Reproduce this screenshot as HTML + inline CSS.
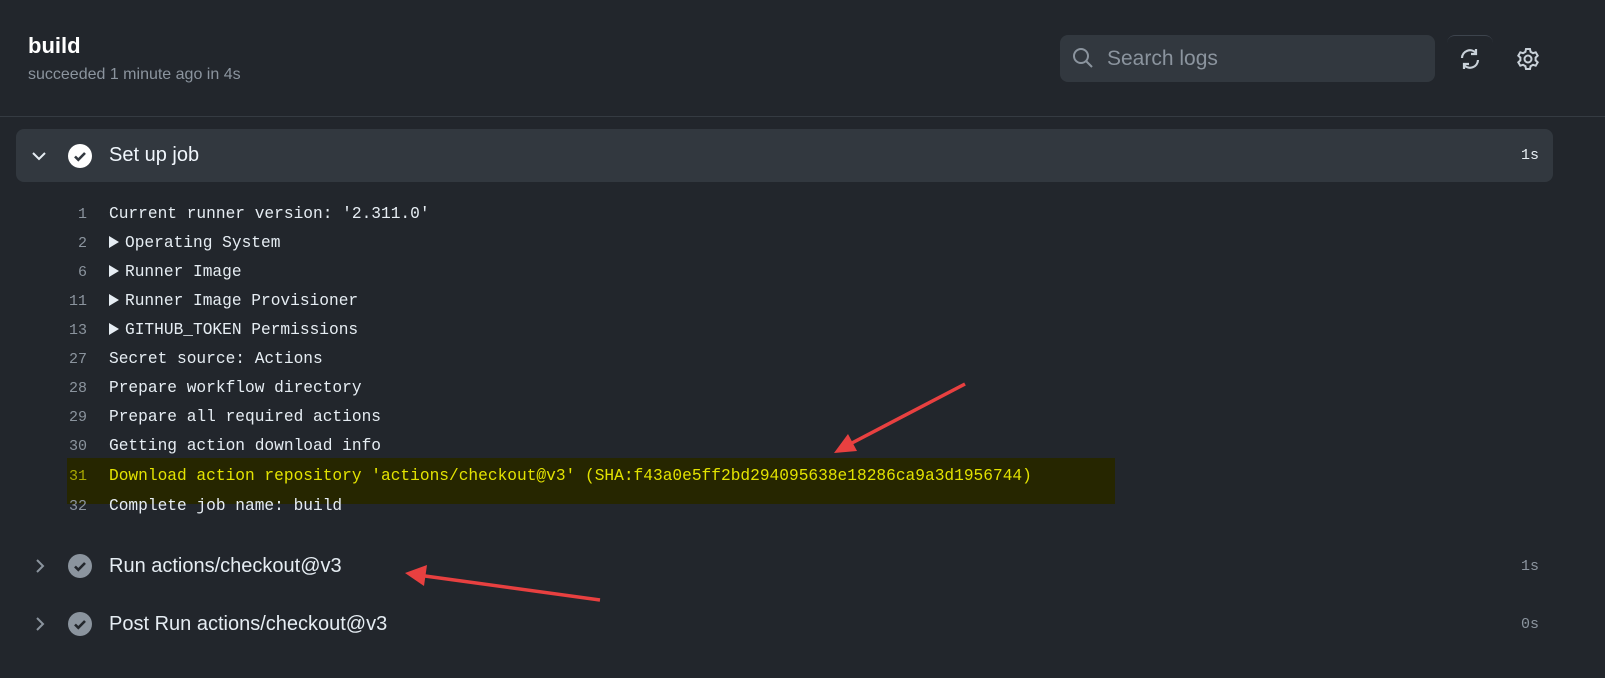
<!DOCTYPE html>
<html><head><meta charset="utf-8"><style>
body{margin:0;width:1605px;height:678px;background:#22262c;font-family:"Liberation Sans",sans-serif;position:relative;overflow:hidden}
.abs{position:absolute}
.mono{font-family:"Liberation Mono",monospace;font-size:16.2px;color:#e6edf3}
.ln{position:absolute;left:60px;width:27px;text-align:right;color:#8b949e;font-family:"Liberation Mono",monospace;font-size:15px}
.tx{position:absolute;left:109px;white-space:pre}
.tri{display:inline-block;width:0;height:0;border-left:10px solid #e6edf3;border-top:6px solid transparent;border-bottom:6px solid transparent;margin-right:6px;vertical-align:-1px}
</style></head><body>
<div class="abs" style="left:28px;top:33px;font-size:22px;font-weight:bold;color:#fff">build</div>
<div class="abs" style="left:28px;top:66px;font-size:16px;color:#8b949e">succeeded 1 minute ago in 4s</div>
<div class="abs" style="left:1060px;top:35px;width:375px;height:47px;background:#32383f;border-radius:8px"></div>
<svg class="abs" style="left:1071px;top:46px" width="24" height="24" viewBox="0 0 24 24"><circle cx="10" cy="10" r="7" fill="none" stroke="#8b949e" stroke-width="2"/><line x1="15" y1="15" x2="21" y2="21" stroke="#8b949e" stroke-width="2"/></svg>
<div class="abs" style="left:1107px;top:47px;font-size:21px;color:#8b949e">Search logs</div>
<div class="abs" style="left:1447px;top:35px;width:46px;height:47px;border-radius:8px;border-top:1px solid #3d444d;box-sizing:border-box"></div>
<svg class="abs" style="left:1458px;top:47px" width="24" height="24" viewBox="0 0 24 24" fill="none" stroke="#c9d1d9" stroke-width="2.2"><path d="M4 11a8 8 0 0 1 14-5"/><path d="M20 13a8 8 0 0 1-14 5"/><path d="M18 2v5h-5" /><path d="M6 22v-5h5"/></svg>
<svg class="abs" style="left:1516px;top:47px" width="24" height="24" viewBox="0 0 24 24" fill="none" stroke="#c9d1d9" stroke-width="2"><circle cx="12" cy="12" r="3.5"/><path d="M10 2h4l.6 2.8 2.4 1.4 2.7-.9 2 3.4-2.1 1.9v2.8l2.1 1.9-2 3.4-2.7-.9-2.4 1.4L14 22h-4l-.6-2.8-2.4-1.4-2.7.9-2-3.4 2.1-1.9v-2.8L2.3 8.7l2-3.4 2.7.9 2.4-1.4z"/></svg>
<div class="abs" style="left:0;top:116px;width:1605px;height:1px;background:#353b42"></div>
<div class="abs" style="left:16px;top:129px;width:1537px;height:53px;background:#32383f;border-radius:8px"></div>
<svg class="abs" style="left:30px;top:147px" width="18" height="18" viewBox="0 0 18 18"><path d="M3 6l6 6 6-6" fill="none" stroke="#e6edf3" stroke-width="2"/></svg>
<svg class="abs" style="left:68px;top:144px" width="24" height="24" viewBox="0 0 24 24"><circle cx="12" cy="12" r="12" fill="#fff"/><path d="M7 12.5l3.3 3.3L17 9" fill="none" stroke="#32383f" stroke-width="2.6"/></svg>
<div class="abs" style="left:109px;top:144px;font-size:20px;color:#f0f6fc">Set up job</div>
<div class="abs mono" style="left:1521px;top:147px;font-size:15px">1s</div>
<div class="abs" style="left:67px;top:458px;width:1048px;height:46px;background:#262600"></div>
<div class="mono">
<div class="ln" style="top:206px">1</div><div class="tx" style="top:205px">Current runner version: '2.311.0'</div>
<div class="ln" style="top:235px">2</div><div class="tx" style="top:234px"><span class="tri"></span>Operating System</div>
<div class="ln" style="top:264px">6</div><div class="tx" style="top:263px"><span class="tri"></span>Runner Image</div>
<div class="ln" style="top:293px">11</div><div class="tx" style="top:292px"><span class="tri"></span>Runner Image Provisioner</div>
<div class="ln" style="top:322px">13</div><div class="tx" style="top:321px"><span class="tri"></span>GITHUB_TOKEN Permissions</div>
<div class="ln" style="top:351px">27</div><div class="tx" style="top:350px">Secret source: Actions</div>
<div class="ln" style="top:380px">28</div><div class="tx" style="top:379px">Prepare workflow directory</div>
<div class="ln" style="top:409px">29</div><div class="tx" style="top:408px">Prepare all required actions</div>
<div class="ln" style="top:438px">30</div><div class="tx" style="top:437px">Getting action download info</div>
<div class="ln" style="top:468px;color:#a8a800">31</div><div class="tx" style="top:467px;color:#e3e300">Download action repository 'actions/checkout@v3' (SHA:f43a0e5ff2bd294095638e18286ca9a3d1956744)</div>
<div class="ln" style="top:498px">32</div><div class="tx" style="top:497px">Complete job name: build</div>
</div>
<svg class="abs" style="left:32px;top:557px" width="16" height="18" viewBox="0 0 16 18"><path d="M5 3l6 6-6 6" fill="none" stroke="#8b949e" stroke-width="2"/></svg>
<svg class="abs" style="left:68px;top:554px" width="24" height="24" viewBox="0 0 24 24"><circle cx="12" cy="12" r="12" fill="#8b949e"/><path d="M7 12.5l3.3 3.3L17 9" fill="none" stroke="#22262c" stroke-width="2.6"/></svg>
<div class="abs" style="left:109px;top:555px;font-size:20px;color:#e6edf3">Run actions/checkout@v3</div>
<div class="abs mono" style="left:1521px;top:558px;font-size:15px;color:#8b949e">1s</div>
<svg class="abs" style="left:32px;top:615px" width="16" height="18" viewBox="0 0 16 18"><path d="M5 3l6 6-6 6" fill="none" stroke="#8b949e" stroke-width="2"/></svg>
<svg class="abs" style="left:68px;top:612px" width="24" height="24" viewBox="0 0 24 24"><circle cx="12" cy="12" r="12" fill="#8b949e"/><path d="M7 12.5l3.3 3.3L17 9" fill="none" stroke="#22262c" stroke-width="2.6"/></svg>
<div class="abs" style="left:109px;top:613px;font-size:20px;color:#e6edf3">Post Run actions/checkout@v3</div>
<div class="abs mono" style="left:1521px;top:616px;font-size:15px;color:#8b949e">0s</div>
<svg class="abs" style="left:0;top:0" width="1605" height="678">
<line x1="965" y1="384" x2="850" y2="444" stroke="#e84040" stroke-width="3.5"/>
<polygon points="834,453 848,434 857,451" fill="#e84040"/>
<line x1="600" y1="600" x2="425" y2="576" stroke="#e84040" stroke-width="3.5"/>
<polygon points="405,573 427,565 424,586" fill="#e84040"/>
</svg>
</body></html>
